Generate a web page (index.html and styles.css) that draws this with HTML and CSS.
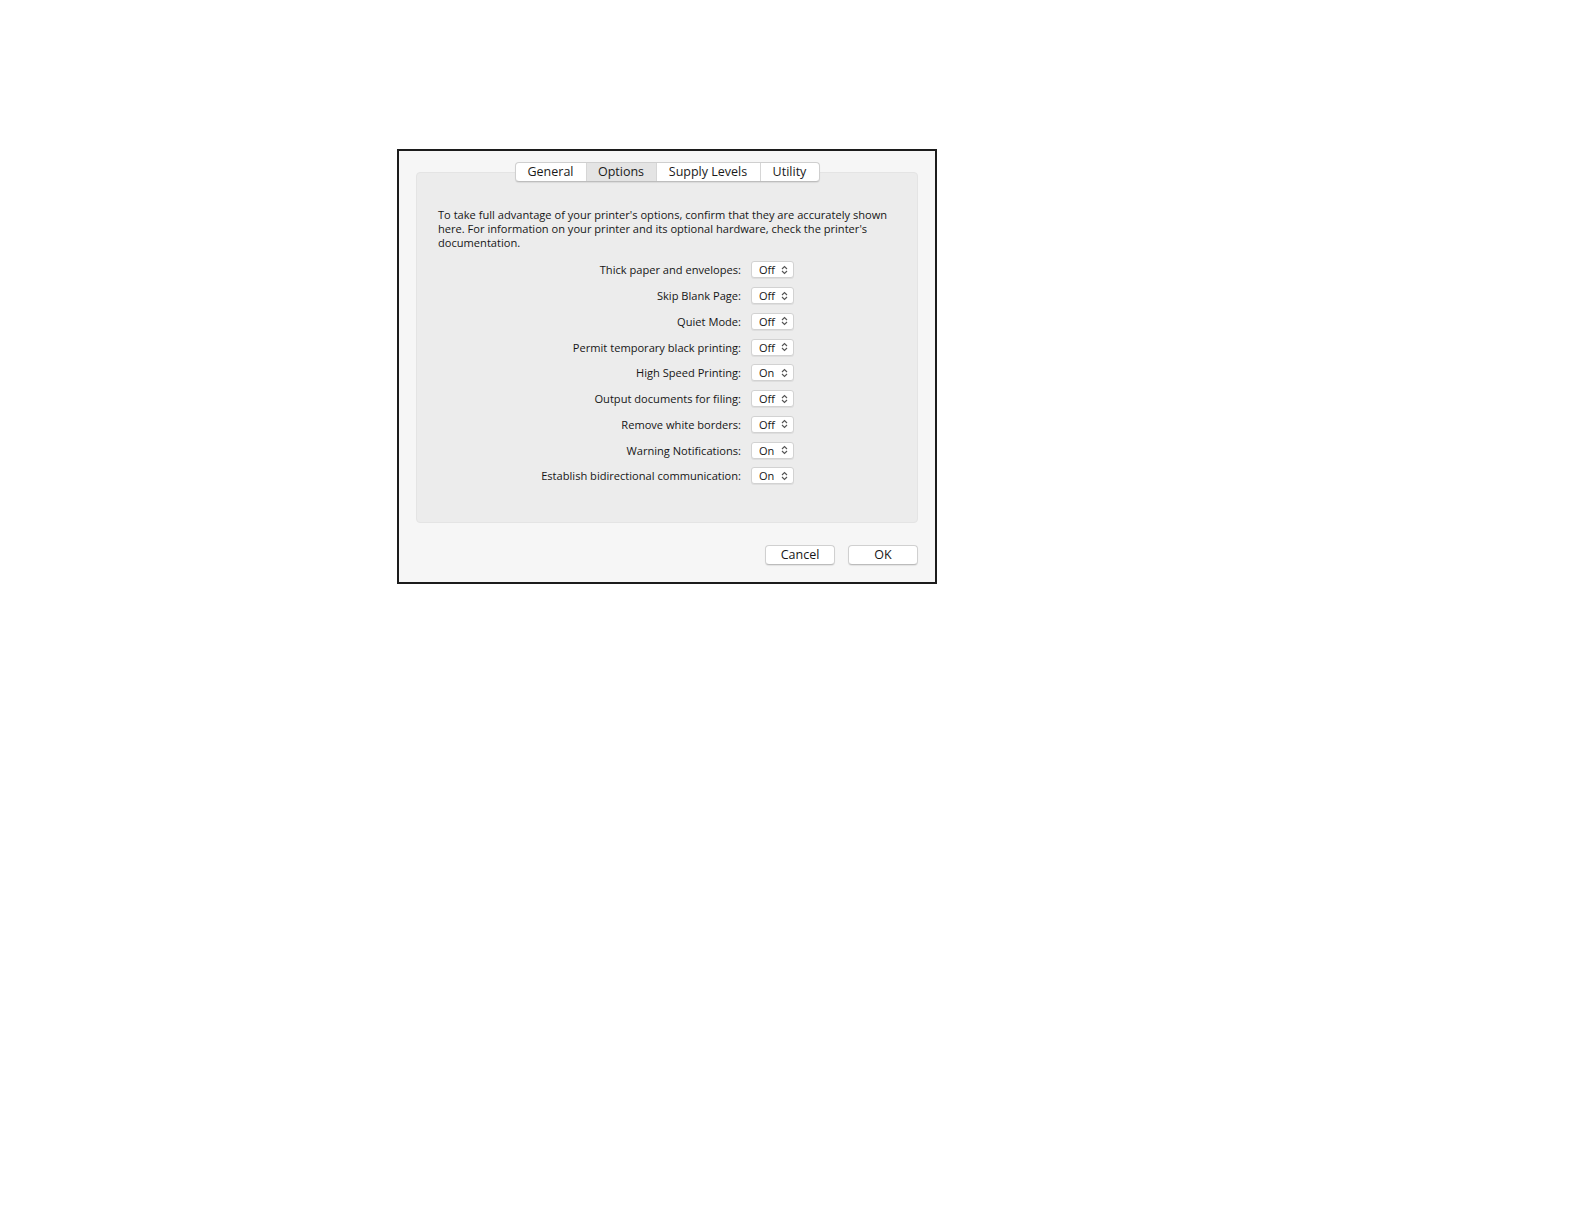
FILE: index.html
```html
<!DOCTYPE html>
<html>
<head>
<meta charset="utf-8">
<link rel="stylesheet" href="styles.css">
</head>
<body>
<div class="page">
  <div class="dialog">
    <div class="tabs">
      <div class="tab">General</div>
      <div class="tab selected">Options</div>
      <div class="tab">Supply Levels</div>
      <div class="tab">Utility</div>
    </div>
    <div class="panel">
      <p class="intro">To take full advantage of your printer's options, confirm that they are accurately shown here. For information on your printer and its optional hardware, check the printer's documentation.</p>
      <div class="rows">
        <div class="row"><span class="label">Thick paper and envelopes:</span><span class="select">Off<svg class="arrows" viewBox="0 0 7 10"><path d="M1 4 L3.5 1.5 L6 4 M1 6 L3.5 8.5 L6 6"/></svg></span></div>
        <div class="row"><span class="label">Skip Blank Page:</span><span class="select">Off<svg class="arrows" viewBox="0 0 7 10"><path d="M1 4 L3.5 1.5 L6 4 M1 6 L3.5 8.5 L6 6"/></svg></span></div>
        <div class="row"><span class="label">Quiet Mode:</span><span class="select">Off<svg class="arrows" viewBox="0 0 7 10"><path d="M1 4 L3.5 1.5 L6 4 M1 6 L3.5 8.5 L6 6"/></svg></span></div>
        <div class="row"><span class="label">Permit temporary black printing:</span><span class="select">Off<svg class="arrows" viewBox="0 0 7 10"><path d="M1 4 L3.5 1.5 L6 4 M1 6 L3.5 8.5 L6 6"/></svg></span></div>
        <div class="row"><span class="label">High Speed Printing:</span><span class="select">On<svg class="arrows" viewBox="0 0 7 10"><path d="M1 4 L3.5 1.5 L6 4 M1 6 L3.5 8.5 L6 6"/></svg></span></div>
        <div class="row"><span class="label">Output documents for filing:</span><span class="select">Off<svg class="arrows" viewBox="0 0 7 10"><path d="M1 4 L3.5 1.5 L6 4 M1 6 L3.5 8.5 L6 6"/></svg></span></div>
        <div class="row"><span class="label">Remove white borders:</span><span class="select">Off<svg class="arrows" viewBox="0 0 7 10"><path d="M1 4 L3.5 1.5 L6 4 M1 6 L3.5 8.5 L6 6"/></svg></span></div>
        <div class="row"><span class="label">Warning Notifications:</span><span class="select">On<svg class="arrows" viewBox="0 0 7 10"><path d="M1 4 L3.5 1.5 L6 4 M1 6 L3.5 8.5 L6 6"/></svg></span></div>
        <div class="row"><span class="label">Establish bidirectional communication:</span><span class="select">On<svg class="arrows" viewBox="0 0 7 10"><path d="M1 4 L3.5 1.5 L6 4 M1 6 L3.5 8.5 L6 6"/></svg></span></div>
      </div>
    </div>
    <div class="buttons">
      <div class="btn">Cancel</div>
      <div class="btn">OK</div>
    </div>
  </div>
</div>
</body>
</html>
```
FILE: styles.css
```css
* { box-sizing: border-box; }
html, body { margin: 0; padding: 0; background: #ffffff; }
body { font-family: "Open Sans", "Liberation Sans", Arial, sans-serif; color: #161616; }
.page { padding: 149px 0 0 397px; }
.dialog {
  width: 540px;
  height: 435px;
  border: 2px solid #1c1c1c;
  background: #f6f6f6;
  padding: 11px 17px 0 17px;
  display: flex;
  flex-direction: column;
}
.tabs {
  align-self: center;
  display: flex;
  height: 20px;
  margin-bottom: -10px;
  position: relative;
  z-index: 1;
  background: #ffffff;
  border: 1px solid #cfcfcf;
  border-bottom-color: #bdbdbd;
  border-radius: 4px;
  box-shadow: 0 1px 1px rgba(0,0,0,0.08);
}
.tab {
  font-size: 12.5px;
  line-height: 18px;
  border-left: 1px solid #d6d6d6;
  color: #1a1a1a;
  text-align: center;
}
.tab:first-child { border-left: none; }
.tab.selected { background: #e4e4e4; }
.tab:nth-child(1) { width: 70px; }
.tab:nth-child(2) { width: 70px; }
.tab:nth-child(3) { width: 104px; }
.tab:nth-child(4) { width: 59px; }
.panel {
  height: 351px;
  background: #ececec;
  border: 1px solid #e4e4e4;
  border-radius: 4px;
  padding: 35px 10px 0 21px;
}
.intro {
  margin: 0;
  max-width: 462px;
  font-size: 11.1px;
  line-height: 14px;
  color: #161616;
}
.rows {
  display: flex;
  flex-direction: column;
  margin-top: 7px;
}
.row {
  height: 25.75px;
  display: flex;
  align-items: center;
}
.label {
  width: 303px;
  text-align: right;
  font-size: 11.1px;
  color: #161616;
  white-space: nowrap;
}
.select {
  margin-left: 10px;
  width: 43px;
  height: 17px;
  background: #ffffff;
  border: 1px solid #d2d2d2;
  border-radius: 3px;
  box-shadow: 0 1px 0 rgba(0,0,0,0.06);
  font-size: 11px;
  line-height: 15px;
  padding-left: 7px;
  display: flex;
  align-items: center;
  justify-content: space-between;
  padding-right: 5px;
  color: #161616;
}
.arrows {
  width: 7px;
  height: 10px;
  fill: none;
  stroke: #555;
  stroke-width: 1.1;
}
.buttons {
  display: flex;
  justify-content: flex-end;
  gap: 13px;
  margin-top: 22px;
}
.btn {
  width: 70px;
  height: 20px;
  background: #ffffff;
  border: 1px solid #d0d0d0;
  border-bottom-color: #bcbcbc;
  border-radius: 4px;
  box-shadow: 0 1px 1px rgba(0,0,0,0.08);
  text-align: center;
  font-size: 12.5px;
  line-height: 18px;
  color: #161616;
}
```
